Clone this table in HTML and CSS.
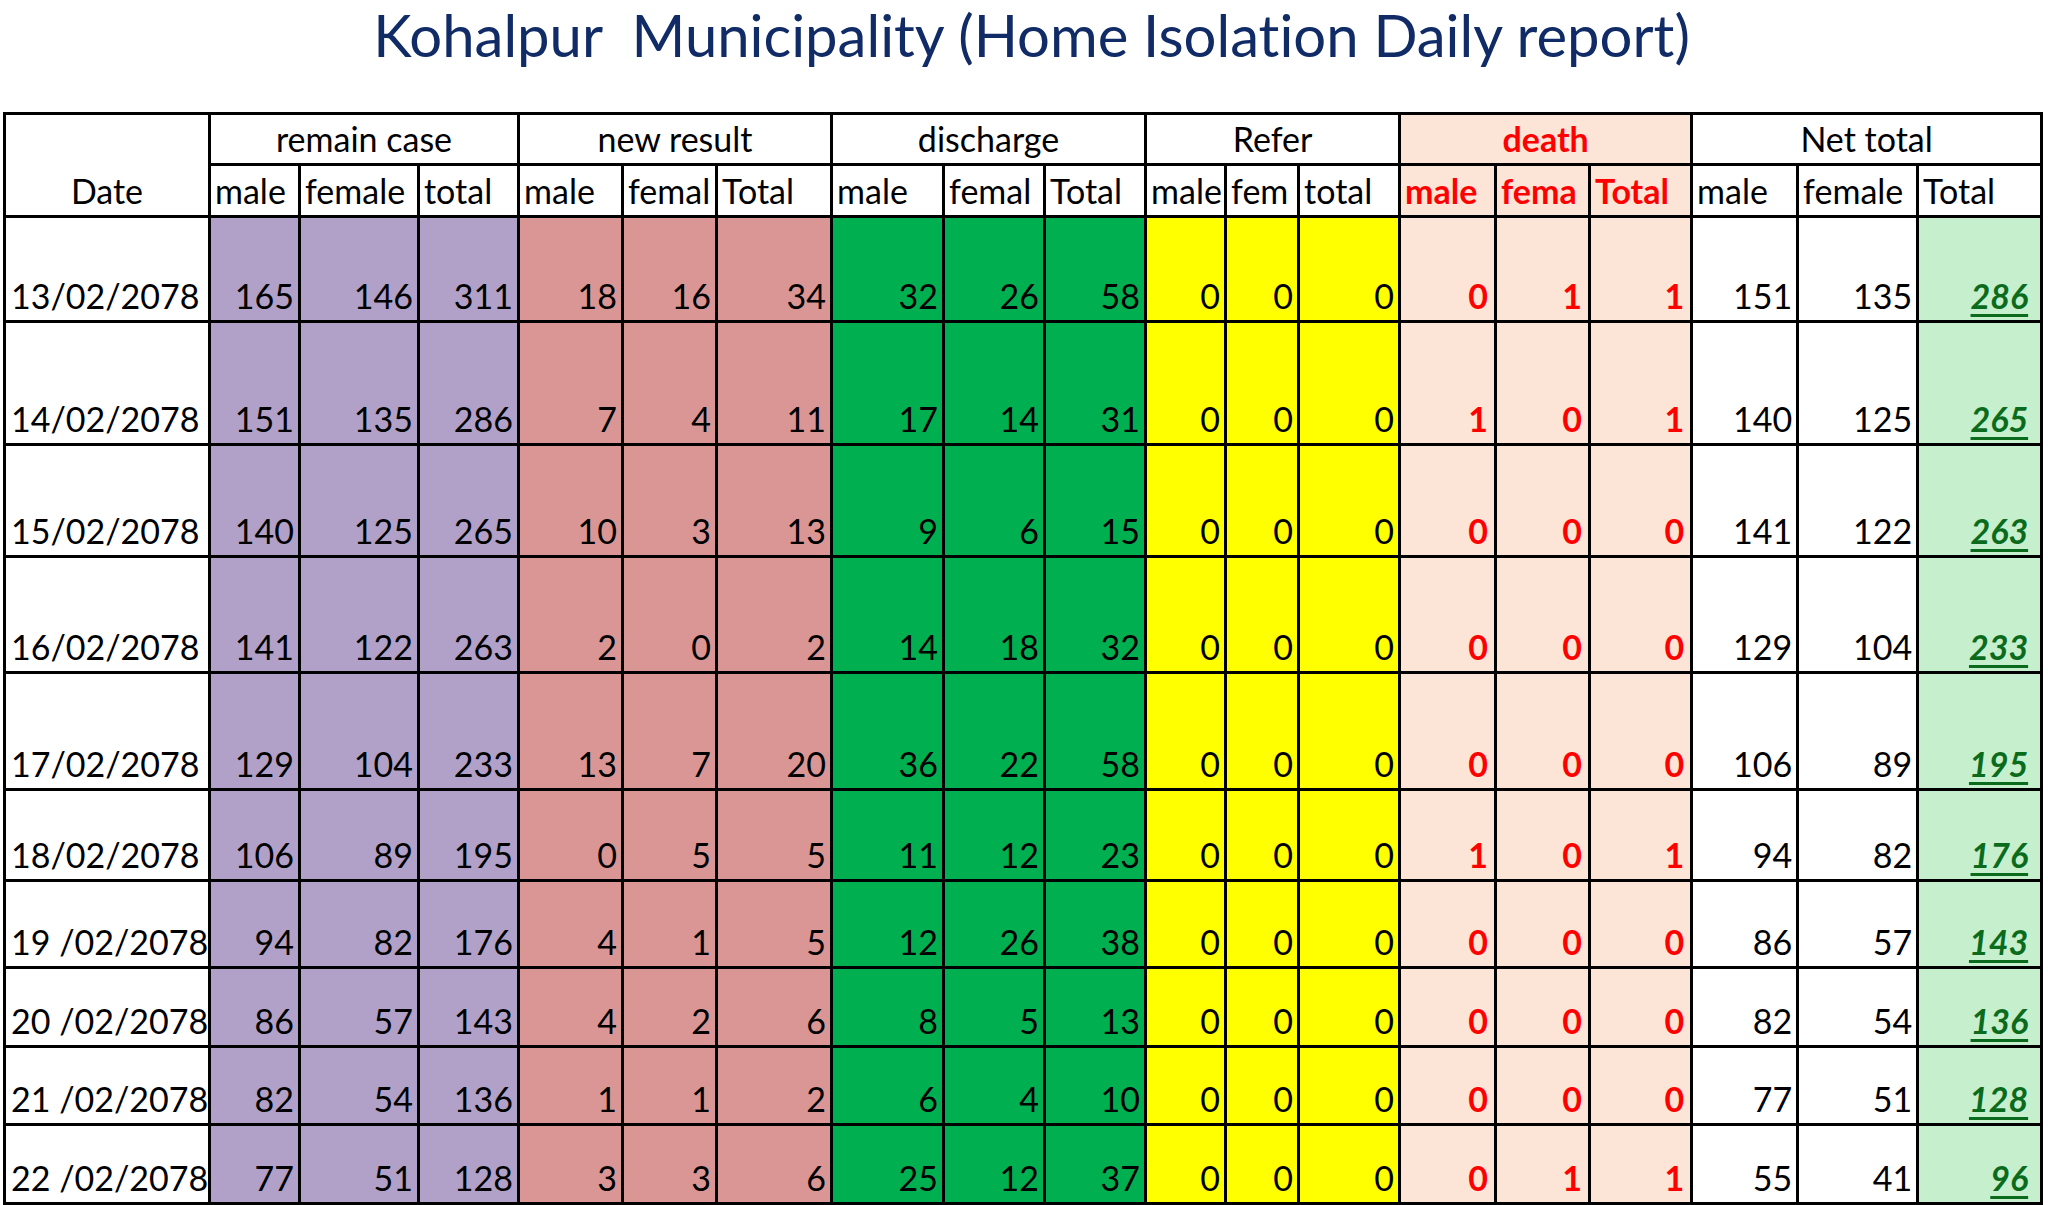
FILE: index.html
```html
<!DOCTYPE html>
<html lang="en">
<head>
<meta charset="utf-8">
<title>Kohalpur Municipality (Home Isolation Daily report)</title>
<link rel="stylesheet" href="styles.css">
</head>
<body>
<main class="sheet">
  <h1 class="title">Kohalpur  Municipality (Home Isolation Daily report)</h1>
  <table class="report">
    <colgroup>
      <col class="w-date">
      <col class="w-rc-m"><col class="w-rc-f"><col class="w-rc-t">
      <col class="w-nr-m"><col class="w-nr-f"><col class="w-nr-t">
      <col class="w-dc-m"><col class="w-dc-f"><col class="w-dc-t">
      <col class="w-rf-m"><col class="w-rf-f"><col class="w-rf-t">
      <col class="w-dt-m"><col class="w-dt-f"><col class="w-dt-t">
      <col class="w-nt-m"><col class="w-nt-f"><col class="w-nt-t">
    </colgroup>
    <thead>
      <tr class="h1row">
        <th class="date-head" rowspan="2">Date</th>
        <th colspan="3">remain case</th>
        <th colspan="3">new result</th>
        <th colspan="3">discharge</th>
        <th colspan="3">Refer</th>
        <th colspan="3" class="death">death</th>
        <th colspan="3">Net total</th>
      </tr>
      <tr class="h2row">
        <th>male</th><th>female</th><th>total</th>
        <th>male</th><th>femal</th><th>Total</th>
        <th>male</th><th>femal</th><th>Total</th>
        <th>male</th><th>fem</th><th>total</th>
        <th class="death">male</th><th class="death">fema</th><th class="death">Total</th>
        <th>male</th><th>female</th><th>Total</th>
      </tr>
    </thead>
    <tbody>
      <tr class="r1">
        <td class="date">13/02/2078</td>
        <td class="rc">165</td><td class="rc">146</td><td class="rc">311</td>
        <td class="nr">18</td><td class="nr">16</td><td class="nr">34</td>
        <td class="dc">32</td><td class="dc">26</td><td class="dc">58</td>
        <td class="rf">0</td><td class="rf">0</td><td class="rf">0</td>
        <td class="dt">0</td><td class="dt">1</td><td class="dt">1</td>
        <td>151</td><td>135</td><td class="nt"><span>286</span></td>
      </tr>
      <tr class="r2">
        <td class="date">14/02/2078</td>
        <td class="rc">151</td><td class="rc">135</td><td class="rc">286</td>
        <td class="nr">7</td><td class="nr">4</td><td class="nr">11</td>
        <td class="dc">17</td><td class="dc">14</td><td class="dc">31</td>
        <td class="rf">0</td><td class="rf">0</td><td class="rf">0</td>
        <td class="dt">1</td><td class="dt">0</td><td class="dt">1</td>
        <td>140</td><td>125</td><td class="nt"><span>265</span></td>
      </tr>
      <tr class="r3">
        <td class="date">15/02/2078</td>
        <td class="rc">140</td><td class="rc">125</td><td class="rc">265</td>
        <td class="nr">10</td><td class="nr">3</td><td class="nr">13</td>
        <td class="dc">9</td><td class="dc">6</td><td class="dc">15</td>
        <td class="rf">0</td><td class="rf">0</td><td class="rf">0</td>
        <td class="dt">0</td><td class="dt">0</td><td class="dt">0</td>
        <td>141</td><td>122</td><td class="nt"><span>263</span></td>
      </tr>
      <tr class="r4">
        <td class="date">16/02/2078</td>
        <td class="rc">141</td><td class="rc">122</td><td class="rc">263</td>
        <td class="nr">2</td><td class="nr">0</td><td class="nr">2</td>
        <td class="dc">14</td><td class="dc">18</td><td class="dc">32</td>
        <td class="rf">0</td><td class="rf">0</td><td class="rf">0</td>
        <td class="dt">0</td><td class="dt">0</td><td class="dt">0</td>
        <td>129</td><td>104</td><td class="nt"><span>233</span></td>
      </tr>
      <tr class="r5">
        <td class="date">17/02/2078</td>
        <td class="rc">129</td><td class="rc">104</td><td class="rc">233</td>
        <td class="nr">13</td><td class="nr">7</td><td class="nr">20</td>
        <td class="dc">36</td><td class="dc">22</td><td class="dc">58</td>
        <td class="rf">0</td><td class="rf">0</td><td class="rf">0</td>
        <td class="dt">0</td><td class="dt">0</td><td class="dt">0</td>
        <td>106</td><td>89</td><td class="nt"><span>195</span></td>
      </tr>
      <tr class="r6">
        <td class="date">18/02/2078</td>
        <td class="rc">106</td><td class="rc">89</td><td class="rc">195</td>
        <td class="nr">0</td><td class="nr">5</td><td class="nr">5</td>
        <td class="dc">11</td><td class="dc">12</td><td class="dc">23</td>
        <td class="rf">0</td><td class="rf">0</td><td class="rf">0</td>
        <td class="dt">1</td><td class="dt">0</td><td class="dt">1</td>
        <td>94</td><td>82</td><td class="nt"><span>176</span></td>
      </tr>
      <tr class="r7">
        <td class="date">19 /02/2078</td>
        <td class="rc">94</td><td class="rc">82</td><td class="rc">176</td>
        <td class="nr">4</td><td class="nr">1</td><td class="nr">5</td>
        <td class="dc">12</td><td class="dc">26</td><td class="dc">38</td>
        <td class="rf">0</td><td class="rf">0</td><td class="rf">0</td>
        <td class="dt">0</td><td class="dt">0</td><td class="dt">0</td>
        <td>86</td><td>57</td><td class="nt"><span>143</span></td>
      </tr>
      <tr class="r8">
        <td class="date">20 /02/2078</td>
        <td class="rc">86</td><td class="rc">57</td><td class="rc">143</td>
        <td class="nr">4</td><td class="nr">2</td><td class="nr">6</td>
        <td class="dc">8</td><td class="dc">5</td><td class="dc">13</td>
        <td class="rf">0</td><td class="rf">0</td><td class="rf">0</td>
        <td class="dt">0</td><td class="dt">0</td><td class="dt">0</td>
        <td>82</td><td>54</td><td class="nt"><span>136</span></td>
      </tr>
      <tr class="r9">
        <td class="date">21 /02/2078</td>
        <td class="rc">82</td><td class="rc">54</td><td class="rc">136</td>
        <td class="nr">1</td><td class="nr">1</td><td class="nr">2</td>
        <td class="dc">6</td><td class="dc">4</td><td class="dc">10</td>
        <td class="rf">0</td><td class="rf">0</td><td class="rf">0</td>
        <td class="dt">0</td><td class="dt">0</td><td class="dt">0</td>
        <td>77</td><td>51</td><td class="nt"><span>128</span></td>
      </tr>
      <tr class="r10">
        <td class="date">22 /02/2078</td>
        <td class="rc">77</td><td class="rc">51</td><td class="rc">128</td>
        <td class="nr">3</td><td class="nr">3</td><td class="nr">6</td>
        <td class="dc">25</td><td class="dc">12</td><td class="dc">37</td>
        <td class="rf">0</td><td class="rf">0</td><td class="rf">0</td>
        <td class="dt">0</td><td class="dt">1</td><td class="dt">1</td>
        <td>55</td><td>41</td><td class="nt"><span>96</span></td>
      </tr>
    </tbody>
  </table>
</main>
</body>
</html>
```

FILE: styles.css
```css
html, body {
  margin: 0;
  padding: 0;
  background: #ffffff;
}

body {
  font-family: Lato, "Open Sans", "Liberation Sans", sans-serif;
  font-variant-ligatures: none;
  color: #000000;
}

.sheet {
  padding: 0 0 0 3px;
}

.title {
  margin: 0 0 40px 0;
  padding-left: 12px;
  height: 72px;
  font-size: 58px;
  line-height: 70px;
  font-weight: 400;
  color: #102b66;
  text-align: center;
  white-space: pre;
}

.report {
  border-collapse: collapse;
  table-layout: fixed;
  width: 2037px;
}

.w-date { width: 205px; }
.w-rc-m { width: 90px; }
.w-rc-f { width: 119px; }
.w-rc-t { width: 100px; }
.w-nr-m { width: 104px; }
.w-nr-f { width: 94px; }
.w-nr-t { width: 115px; }
.w-dc-m { width: 112px; }
.w-dc-f { width: 101px; }
.w-dc-t { width: 101px; }
.w-rf-m { width: 80px; }
.w-rf-f { width: 73px; }
.w-rf-t { width: 101px; }
.w-dt-m { width: 96px; }
.w-dt-f { width: 94px; }
.w-dt-t { width: 102px; }
.w-nt-m { width: 106px; }
.w-nt-f { width: 120px; }
.w-nt-t { width: 124px; }

.report th,
.report td {
  border: 3px solid #000000;
  padding: 0 4px 4px 4px;
  font-size: 34px;
  line-height: 40px;
  font-weight: 400;
  vertical-align: bottom;
  white-space: nowrap;
  overflow: hidden;
  text-align: right;
}

.report th {
  text-align: center;
}

.h1row { height: 51px; }
.h2row { height: 52px; }

.h2row th {
  text-align: left;
  padding-left: 4px;
  padding-right: 0;
}

.report .date-head {
  text-align: center;
}

.report td.date {
  text-align: left;
  padding-left: 5px;
}

.r1 { height: 105px; }
.r2 { height: 123px; }
.r3 { height: 112px; }
.r4 { height: 116px; }
.r5 { height: 117px; }
.r6 { height: 91px; }
.r7 { height: 87px; }
.r8 { height: 79px; }
.r9 { height: 78px; }
.r10 { height: 79px; }

.rc { background: #b1a0c7; }
.nr { background: #da9694; }
.dc { background: #00b050; }
.rf { background: #ffff00; }

.report .death,
.report .dt {
  background: #fce4d6;
  color: #ff0000;
  font-weight: 700;
}

.report td.dt {
  padding-right: 6px;
}

.report td.nt {
  background: #c6efce;
  color: #0b6b1c;
  font-weight: 700;
  font-style: italic;
  padding-right: 4px;
}

.nt span {
  text-decoration: underline;
  text-decoration-thickness: 3px;
  text-underline-offset: 5px;
  padding-right: 8px;
}
```
